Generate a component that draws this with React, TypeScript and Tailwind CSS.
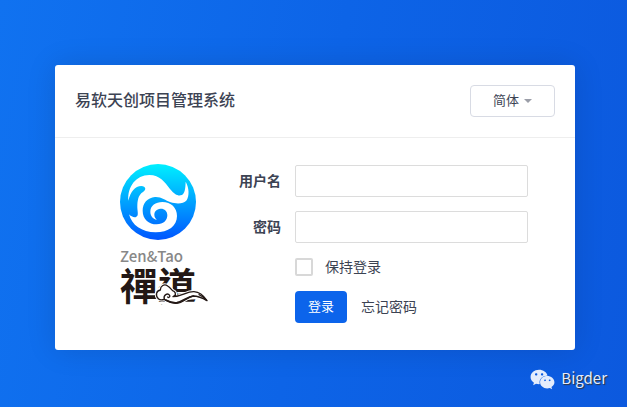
import React from "react";
import { FaWeixin } from "react-icons/fa";

function Swirl() {
  return (
    <svg viewBox="30 27 228 228" className="size-19" aria-hidden="true">
      <defs>
        <linearGradient id="sea" x1="0" y1="0" x2="0" y2="1">
          <stop offset="0" stopColor="#00f0ff" />
          <stop offset="0.5" stopColor="#00a2ff" />
          <stop offset="1" stopColor="#0055ff" />
        </linearGradient>
      </defs>
      <circle cx="144" cy="141" r="114" fill="url(#sea)" />
      <path
        fill="#fff"
        d="M55 137C52 95 78 60 118 60C150 60 165 82 180 102C193 118 203 123 213 121C226 117 226 98 227 80C238 100 238 122 230 136C220 148 198 147 182 142C165 136 155 125 135 126C112 128 98 145 98 167C98 192 116 208 140 208C160 208 172 196 172 181C172 167 162 160 151 161C140 162 133 170 133 179C133 186 137 191 141 194C128 192 121 182 121 170C121 152 137 141 157 141C183 141 201 158 201 183C201 213 175 232 137 232C95 232 65 210 57 178C62 184 72 188 78 186C88 182 81 168 82 150C83 130 88 118 98 112C110 104 108 94 94 93C75 93 62 110 55 137Z"
      />
    </svg>
  );
}

const cloudOutline =
  "M28 72C18 62 22 48 34 46C34 34 46 26 56 34C66 40 68 48 75 50C82 56 80 64 72 66C100 66 112 50 135 51C153 52 166 66 174 78C158 68 146 64 132 64C115 66 104 86 80 86C62 86 54 78 46 74C40 76 32 76 28 72Z";

function Cloud() {
  return (
    <svg
      viewBox="18 22 159 66"
      className="absolute right-0 bottom-0 h-[22px] w-[53px]"
      fill="none"
      stroke="#231815"
      strokeLinecap="round"
      strokeLinejoin="round"
      aria-hidden="true"
    >
      <path d={cloudOutline} fill="#fff" stroke="#fff" strokeWidth="10" />
      <path d="M24 88V84H176V88Z" fill="#fff" stroke="#fff" strokeWidth="6" />
      <path d={cloudOutline} fill="#fff" strokeWidth="4" />
      <path d="M46 74C42 60 56 54 62 62C64 68 58 70 56 67" strokeWidth="4" />
      <path d="M50 76C62 82 72 86 84 84C104 80 114 66 134 64" strokeWidth="5" />
      <path d="M150 60C160 64 168 71 173 77" strokeWidth="4" />
    </svg>
  );
}

function Brand() {
  return (
    <div className="flex w-[88px] shrink-0 flex-col">
      <Swirl />
      <span className="mt-2 text-[15px] leading-4 font-medium text-[#888]">Zen&amp;Tao</span>
      <div className="relative h-10 text-[38px] leading-10 font-bold text-[#231815] [font-family:'Noto_Sans_CJK_TC',sans-serif]">
        禪道
        <Cloud />
      </div>
    </div>
  );
}

const inputClass = "h-8 w-full min-w-0 rounded-xs border border-[#dcdcdc] bg-white px-2 text-sm outline-none focus:border-[#0c64eb]";

export default function App() {
  return (
    <main className="flex min-h-screen flex-col bg-linear-[100deg,#1072f0,#0d64e7_50%,#0c59de] pt-[65px] pr-5 pl-[23px] text-[#3c4353] [font-family:'Noto_Sans_CJK_SC',sans-serif]">
      <section className="mx-auto w-full max-w-[520px] rounded-[3px] bg-white shadow-[0_0_30px_rgba(0,0,0,0.12)]">
        <header className="flex items-start justify-between border-b border-[#eee] p-5">
          <h1 className="text-base leading-7 font-medium">易软天创项目管理系统</h1>
          <div className="relative">
            <select
              aria-label="语言"
              className="block h-8 w-[85px] appearance-none rounded border border-[#d8dbe4] bg-white pb-0.5 pl-[22px] text-[13px] outline-none"
            >
              <option>简体</option>
              <option>繁體</option>
            </select>
            <svg viewBox="0 0 8 4" className="pointer-events-none absolute top-3.5 right-[23px] h-1 w-2" aria-hidden="true">
              <path d="M0 0H8L4 4Z" fill="#9b9ea8" />
            </svg>
          </div>
        </header>
        <div className="flex justify-between gap-4 pt-[26px] pr-[47px] pb-[27px] pl-[65px]">
          <Brand />
          <form className="grid w-[289px] grid-cols-[auto_minmax(0,1fr)] items-center gap-3.5 pt-px text-sm leading-5">
            <label htmlFor="account" className="pb-0.5 text-right font-bold">用户名</label>
            <input id="account" type="text" className={inputClass} />
            <label htmlFor="password" className="pb-0.5 text-right font-bold">密码</label>
            <input id="password" type="password" className={inputClass} />
            <div className="col-start-2 flex h-5 items-center gap-3">
              <input
                id="keep"
                type="checkbox"
                className="size-[18px] appearance-none rounded-xs border-2 border-[#d8d8d8] bg-white checked:bg-[#0c64eb]"
              />
              <label htmlFor="keep" className="pb-0.5">保持登录</label>
            </div>
            <div className="col-start-2 flex items-center gap-3.5">
              <button type="button" className="h-8 rounded bg-[#0c64eb] px-[13px] pb-0.5 text-[13px] text-white">登录</button>
              <a href="#reset" className="pb-0.5">忘记密码</a>
            </div>
          </form>
        </div>
      </section>
      <footer className="mt-4 flex items-center justify-end gap-1.5 text-[#e3ecfc]">
        <FaWeixin className="size-[25px]" aria-hidden="true" />
        <span className="pb-0.5 text-[15px] leading-6 [text-shadow:1px_1px_1px_#333]">Bigder</span>
      </footer>
    </main>
  );
}
